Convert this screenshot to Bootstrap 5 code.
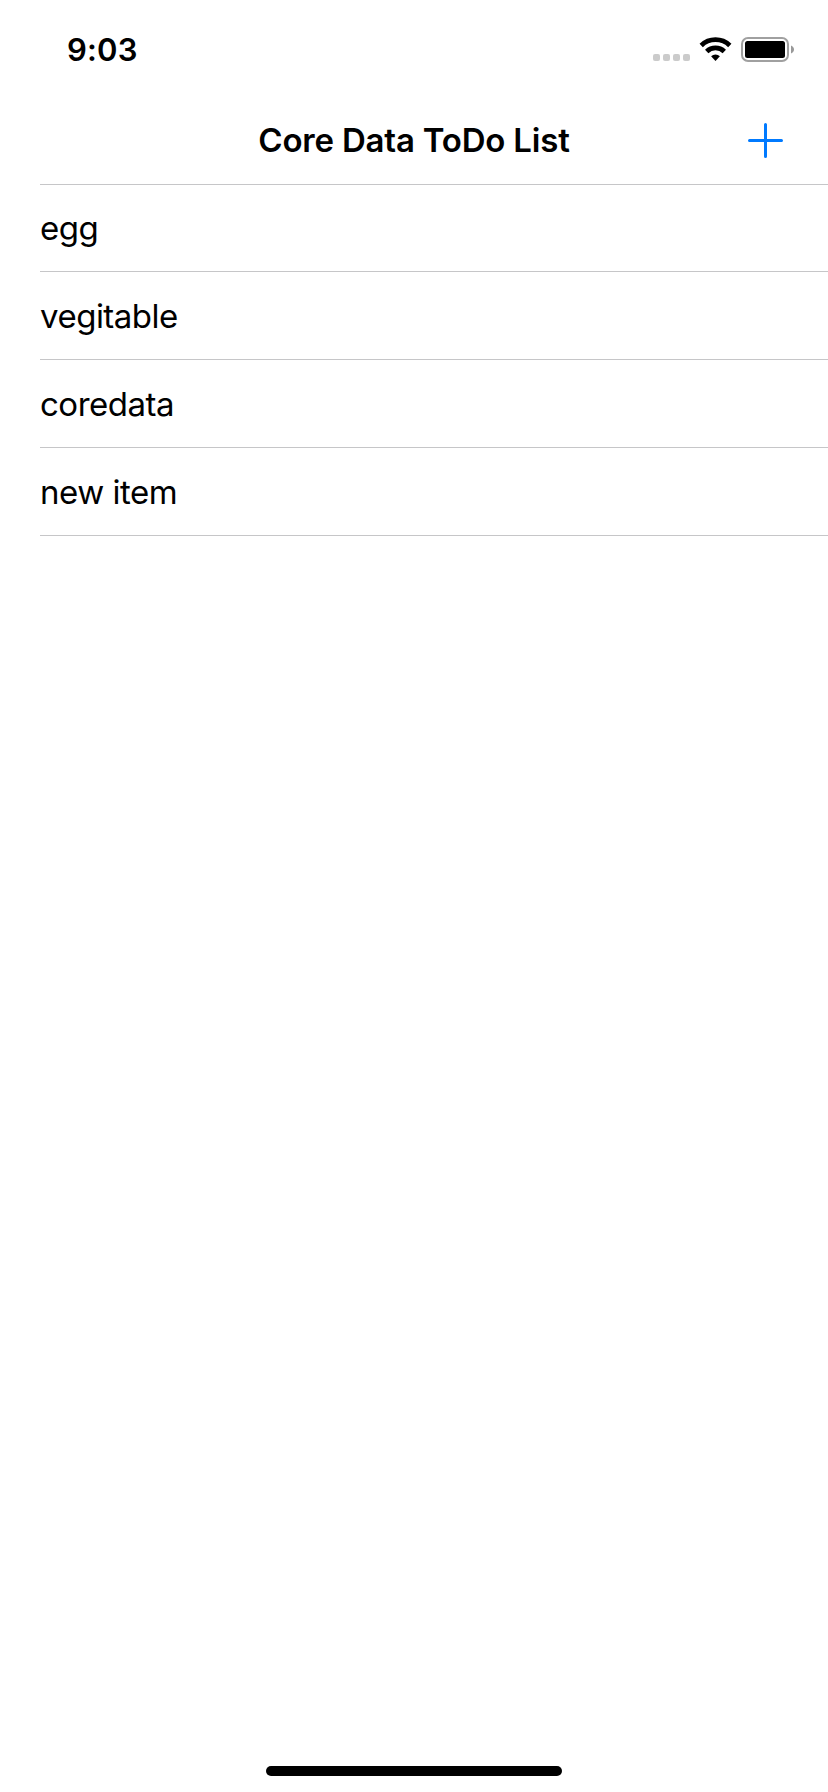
<!DOCTYPE html>
<html lang="en">
<head>
<meta charset="utf-8">
<meta name="viewport" content="width=device-width, initial-scale=1">
<title>Core Data ToDo List</title>
<link rel="stylesheet" href="https://cdn.jsdelivr.net/npm/bootstrap@5.3.0/dist/css/bootstrap.min.css">
<style>
  body { font-family: Inter, "Liberation Sans", sans-serif; color: #000; background: #fff; }
  .screen { height: 1792px; }
  .status-bar { height: 96px; padding: 0 20px 0 67px; }
  .clock { font-size: 31px; line-height: 40px; font-weight: 600; margin-top: 30px; letter-spacing: .2px; }
  .status-icons { margin-top: 25px; }
  .title-bar { height: 88px; }
  .title-bar h1 { font-size: 33px; line-height: 40px; font-weight: 600; letter-spacing: -.2px; }
  .add-btn { right: 44px; top: 26px; line-height: 0; }
  .todo-list { margin-left: 40px; border-top: 1px solid #c6c6c8; }
  .todo-list .list-group-item { height: 88px; padding: 0; border: 0; border-bottom: 1px solid #c6c6c8; border-radius: 0; color: #000; font-size: 33px; line-height: 40px; letter-spacing: -.5px; }
  .todo-list .list-group-item:first-child { height: 87px; }
  .home-indicator { width: 296px; height: 10px; margin-bottom: 16px; background: #000; }
</style>
</head>
<body>
<div class="screen d-flex flex-column overflow-hidden">
  <header class="status-bar d-flex justify-content-between align-items-start flex-shrink-0">
    <div class="clock">9:03</div>
    <svg class="status-icons" width="168" height="50" viewBox="0 0 168 50" aria-hidden="true">
      <g fill="#cbcbcb">
        <rect x="13" y="29" width="7" height="7" rx="2"/><rect x="23" y="29" width="7" height="7" rx="2"/>
        <rect x="33" y="29" width="7" height="7" rx="2"/><rect x="43" y="29" width="7" height="7" rx="2"/>
      </g>
      <g fill="none" stroke="#000" stroke-width="4.8">
        <path d="M61.2 20.4a20.6 20.6 0 0 1 28.6 0"/>
        <path d="M66.7 26.4a12.7 12.7 0 0 1 17.6 0"/>
      </g>
      <path d="M71.1 31.2a6.6 6.6 0 0 1 8.8 0l-4.4 4.8z"/>
      <rect x="102" y="13" width="46" height="23" rx="6" fill="none" stroke="#a0a0a0" stroke-width="2"/>
      <rect x="105" y="16" width="40" height="17" rx="2.5"/>
      <path d="M151 20.5c4 1.6 4 6.4 0 8z" fill="#999"/>
    </svg>
  </header>
  <nav class="title-bar position-relative d-flex justify-content-center align-items-start flex-shrink-0 pt-4">
    <h1 class="mb-0">Core Data ToDo List</h1>
    <button class="add-btn position-absolute btn border-0 p-0" aria-label="Add item">
      <svg width="36" height="36" viewBox="0 0 36 36"><path d="M17.5 2.5v32M1.5 18.5h32" stroke="#007aff" stroke-width="3" stroke-linecap="round"/></svg>
    </button>
  </nav>
  <ul class="todo-list list-group rounded-0">
    <li class="list-group-item d-flex align-items-center">egg</li>
    <li class="list-group-item d-flex align-items-center">vegitable</li>
    <li class="list-group-item d-flex align-items-center">coredata</li>
    <li class="list-group-item d-flex align-items-center">new item</li>
  </ul>
  <div class="home-indicator rounded-pill mt-auto mx-auto"></div>
</div>
<script src="https://cdn.jsdelivr.net/npm/bootstrap@5.3.0/dist/js/bootstrap.bundle.min.js"></script>
</body>
</html>
